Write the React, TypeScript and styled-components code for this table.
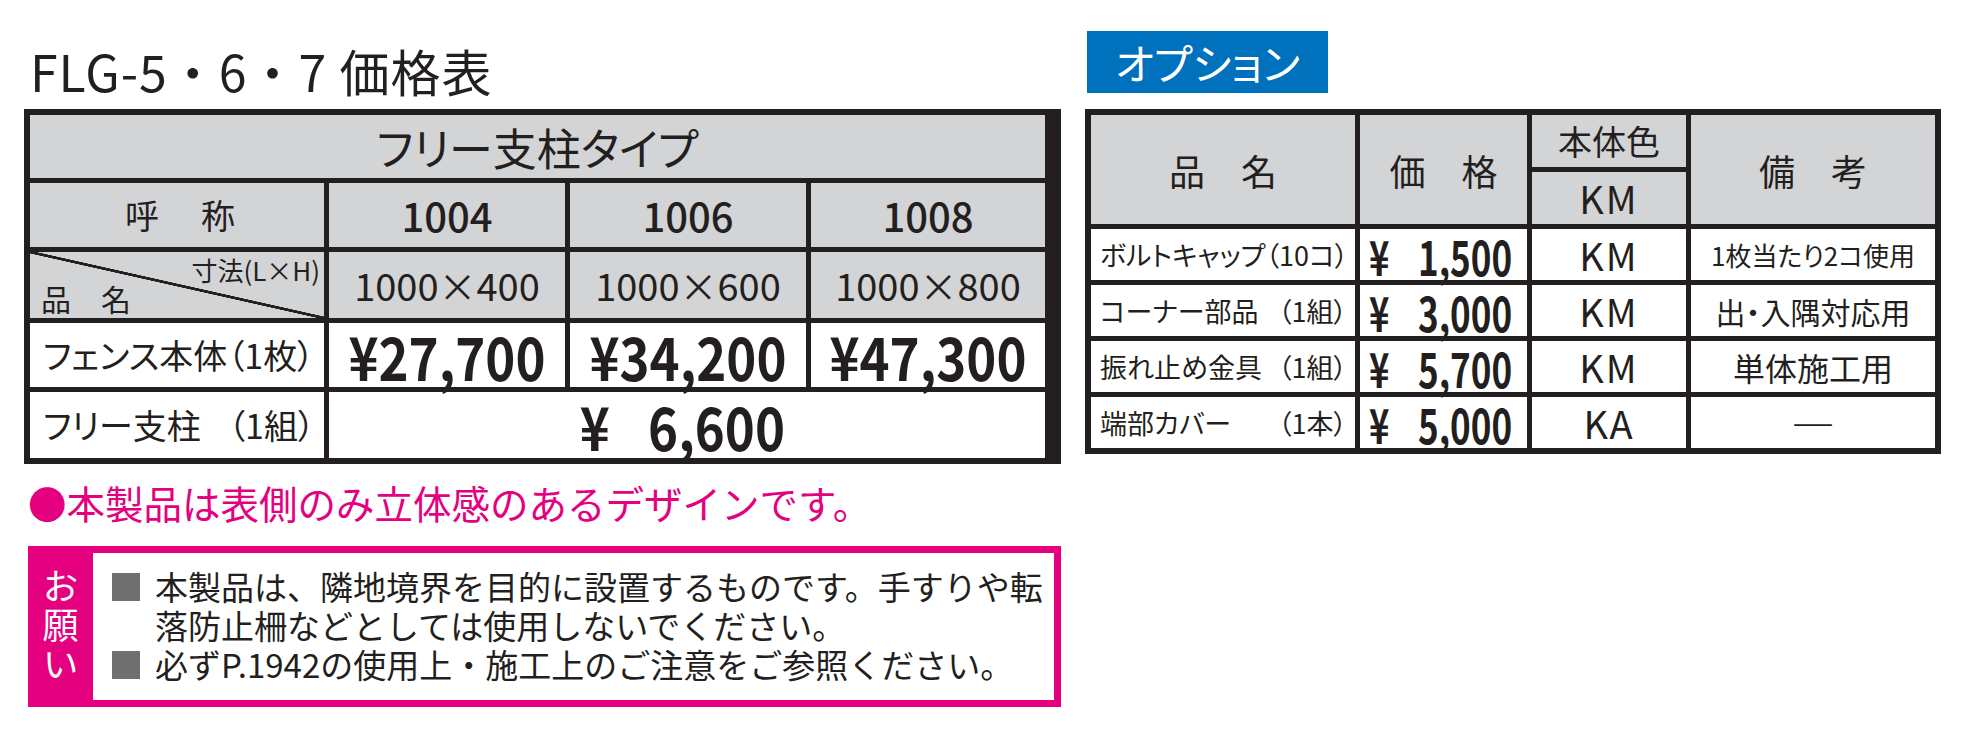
import React from "react";
import styled, { createGlobalStyle } from "styled-components";

const INK = "#231f20";
const GRAY = "#d3d4d6";
const PINK = "#e4007f";
const BLUE = "#0071bc";

const GlobalStyle = createGlobalStyle`
  html, body { margin: 0; padding: 0; background: #fff; }
  body {
    font-family: "Noto Sans CJK JP", "Noto Sans", sans-serif;
    color: ${INK};
  }
  * { box-sizing: border-box; }
`;

const Page = styled.div`
  display: flex;
  align-items: flex-start;
  gap: 24px;
  padding-left: 24px;
  width: 1971px;
  height: 739px;
  overflow: hidden;
`;

const LeftCol = styled.div`
  width: 1037px;
  display: flex;
  flex-direction: column;
`;

const RightCol = styled.div`
  width: 856px;
  display: flex;
  flex-direction: column;
`;

const Title = styled.h1`
  margin: 40px 0 9px 6px;
  height: 60px;
  font-size: 50px;
  line-height: 60px;
  font-weight: 400;
  white-space: nowrap;
  letter-spacing: 1px;
`;

const Squeeze = styled.span<{ $sx: number; $origin?: string; $ml?: number }>`
  display: inline-block;
  white-space: nowrap;
  margin-left: ${(p) => p.$ml ?? 0}px;
  transform: scaleX(${(p) => p.$sx});
  transform-origin: ${(p) => p.$origin ?? "center"};
`;

const Grid = styled.div<{ $cols: string; $rows: string }>`
  display: grid;
  grid-template-columns: ${(p) => p.$cols};
  grid-template-rows: ${(p) => p.$rows};
  gap: 5px;
  padding: 6px;
  background: ${INK};
  font-feature-settings: "palt";
`;

const Cell = styled.div<{
  $head?: boolean;
  $span?: number;
  $rowSpan?: number;
  $size?: number;
  $weight?: number;
  $justify?: string;
  $pad?: string;
  $ls?: number;
}>`
  background: ${(p) => (p.$head ? GRAY : "#fff")};
  display: flex;
  align-items: center;
  justify-content: ${(p) => p.$justify ?? "center"};
  padding: ${(p) => p.$pad ?? "0"};
  grid-column: ${(p) => (p.$span ? `span ${p.$span}` : "auto")};
  grid-row: ${(p) => (p.$rowSpan ? `span ${p.$rowSpan}` : "auto")};
  font-size: ${(p) => p.$size ?? 32}px;
  font-weight: ${(p) => p.$weight ?? 400};
  letter-spacing: ${(p) => p.$ls ?? 0}px;
  line-height: 1;
  white-space: nowrap;
  min-width: 0;
`;

const DiagCell = styled.div`
  background: linear-gradient(
    to top right,
    ${GRAY} calc(50% - 1.6px),
    ${INK} calc(50% - 1.2px),
    ${INK} calc(50% + 1.2px),
    ${GRAY} calc(50% + 1.6px)
  );
  display: flex;
  flex-direction: column;
  justify-content: space-between;
  padding: 5px 4px 5px 11px;
  line-height: 1;
  white-space: nowrap;
`;

const DiagTop = styled.span`
  align-self: flex-end;
  font-size: 26px;
`;

const DiagBottom = styled.span`
  align-self: flex-start;
  font-size: 30px;
`;

const Note = styled.p`
  margin: 14px 0 20px 4px;
  font-size: 38.5px;
  line-height: 48px;
  color: ${PINK};
  white-space: nowrap;
`;

const RequestBox = styled.div`
  margin-left: 4px;
  width: 1033px;
  height: 161px;
  display: flex;
  background: ${PINK};
  padding: 7px 7px 7px 0;
`;

const RequestLabel = styled.div`
  width: 65px;
  display: flex;
  align-items: center;
  justify-content: center;
  color: #fff;
  font-size: 36px;
  line-height: 1;
  writing-mode: vertical-rl;
  text-orientation: upright;
  letter-spacing: 3px;
`;

const RequestBody = styled.div`
  flex: 1;
  background: #fff;
  padding: 14px 0 0 19px;
  display: flex;
  flex-direction: column;
`;

const Item = styled.div`
  display: flex;
  align-items: flex-start;
  gap: 15px;
`;

const Marker = styled.span`
  flex: none;
  width: 28px;
  height: 28px;
  margin-top: 6px;
  background: #6f6f70;
`;

const ItemText = styled.div`
  font-size: 33px;
  line-height: 39px;
  white-space: nowrap;
`;

const Badge = styled.div`
  margin: 31px 0 16px 2px;
  width: 241px;
  height: 62px;
  background: ${BLUE};
  color: #fff;
  display: flex;
  align-items: center;
  justify-content: center;
  font-size: 42px;
  line-height: 1;
  font-feature-settings: "palt";
`;

const fenceCols = ["1004", "1006", "1008"];
const fenceSizes = ["1000×400", "1000×600", "1000×800"];
const fencePrices = ["¥27,700", "¥34,200", "¥47,300"];

const options = [
  { name: "ボルトキャップ", qty: "（10コ）", price: "1,500", color: "KM", note: "1枚当たり2コ使用", noteSize: 26 },
  { name: "コーナー部品", qty: "（1組）", price: "3,000", color: "KM", note: "出・入隅対応用", noteSize: 30 },
  { name: "振れ止め金具", qty: "（1組）", price: "5,700", color: "KM", note: "単体施工用", noteSize: 32 },
  { name: "端部カバー", qty: "（1本）", price: "5,000", color: "KA", note: "―", noteSize: 44 },
];

export default function App() {
  return (
    <>
      <GlobalStyle />
      <Page>
        <LeftCol>
          <Title>FLG-5・6・7 価格表</Title>
          <Grid $cols="294px 236px 236px 234px" $rows="63px 64px 66px 64px 66px">
            <Cell $head $span={4} $size={44}>
              フリー支柱タイプ
            </Cell>
            <Cell $head $size={34} $ls={4} $pad="0 0 0 10px">
              呼　称
            </Cell>
            {fenceCols.map((c) => (
              <Cell key={c} $head $size={40} $weight={500}>
                {c}
              </Cell>
            ))}
            <DiagCell>
              <DiagTop>寸法(L×H)</DiagTop>
              <DiagBottom>品　名</DiagBottom>
            </DiagCell>
            {fenceSizes.map((s) => (
              <Cell key={s} $head $size={38}>
                {s}
              </Cell>
            ))}
            <Cell $size={34} $justify="flex-start" $pad="0 0 0 13px">
              フェンス本体（1枚）
            </Cell>
            {fencePrices.map((p) => (
              <Cell key={p} $size={60} $weight={700}>
                <Squeeze $sx={0.85}>{p}</Squeeze>
              </Cell>
            ))}
            <Cell $size={34} $justify="space-between" $pad="0 9px 0 13px">
              <span>フリー支柱</span>
              <span>（1組）</span>
            </Cell>
            <Cell $span={3} $size={60} $weight={700}>
              <Squeeze $sx={0.85}>¥</Squeeze>
              <Squeeze $sx={0.85} $ml={24}>
                6,600
              </Squeeze>
            </Cell>
          </Grid>
          <Note>●本製品は表側のみ立体感のあるデザインです。</Note>
          <RequestBox>
            <RequestLabel>お願い</RequestLabel>
            <RequestBody>
              <Item>
                <Marker />
                <ItemText>
                  本製品は、隣地境界を目的に設置するものです。手すりや転
                  <br />
                  落防止柵などとしては使用しないでください。
                </ItemText>
              </Item>
              <Item>
                <Marker />
                <ItemText>必ずP.1942の使用上・施工上のご注意をご参照ください。</ItemText>
              </Item>
            </RequestBody>
          </RequestBox>
        </LeftCol>
        <RightCol>
          <Badge>オプション</Badge>
          <Grid $cols="264px 167px 154px 244px" $rows="52px 52px 51px 51px 51px 51px">
            <Cell $head $rowSpan={2} $size={36}>
              品　名
            </Cell>
            <Cell $head $rowSpan={2} $size={36}>
              価　格
            </Cell>
            <Cell $head $size={34}>
              本体色
            </Cell>
            <Cell $head $rowSpan={2} $size={36}>
              備　考
            </Cell>
            <Cell $head $size={38} $ls={2}>
              KM
            </Cell>
            {options.map((o) => (
              <React.Fragment key={o.name}>
                <Cell $size={27} $justify="space-between" $pad="0 8px 0 9px">
                  <span>{o.name}</span>
                  <span>{o.qty}</span>
                </Cell>
                <Cell $size={48} $weight={700} $justify="flex-start" $pad="0 0 0 9px">
                  <Squeeze $sx={0.72} $origin="left">
                    ¥
                  </Squeeze>
                  <Squeeze $sx={0.73} $origin="left" $ml={21}>
                    {o.price}
                  </Squeeze>
                </Cell>
                <Cell $size={38} $ls={2}>
                  {o.color}
                </Cell>
                <Cell $size={o.noteSize}>{o.note}</Cell>
              </React.Fragment>
            ))}
          </Grid>
        </RightCol>
      </Page>
    </>
  );
}
